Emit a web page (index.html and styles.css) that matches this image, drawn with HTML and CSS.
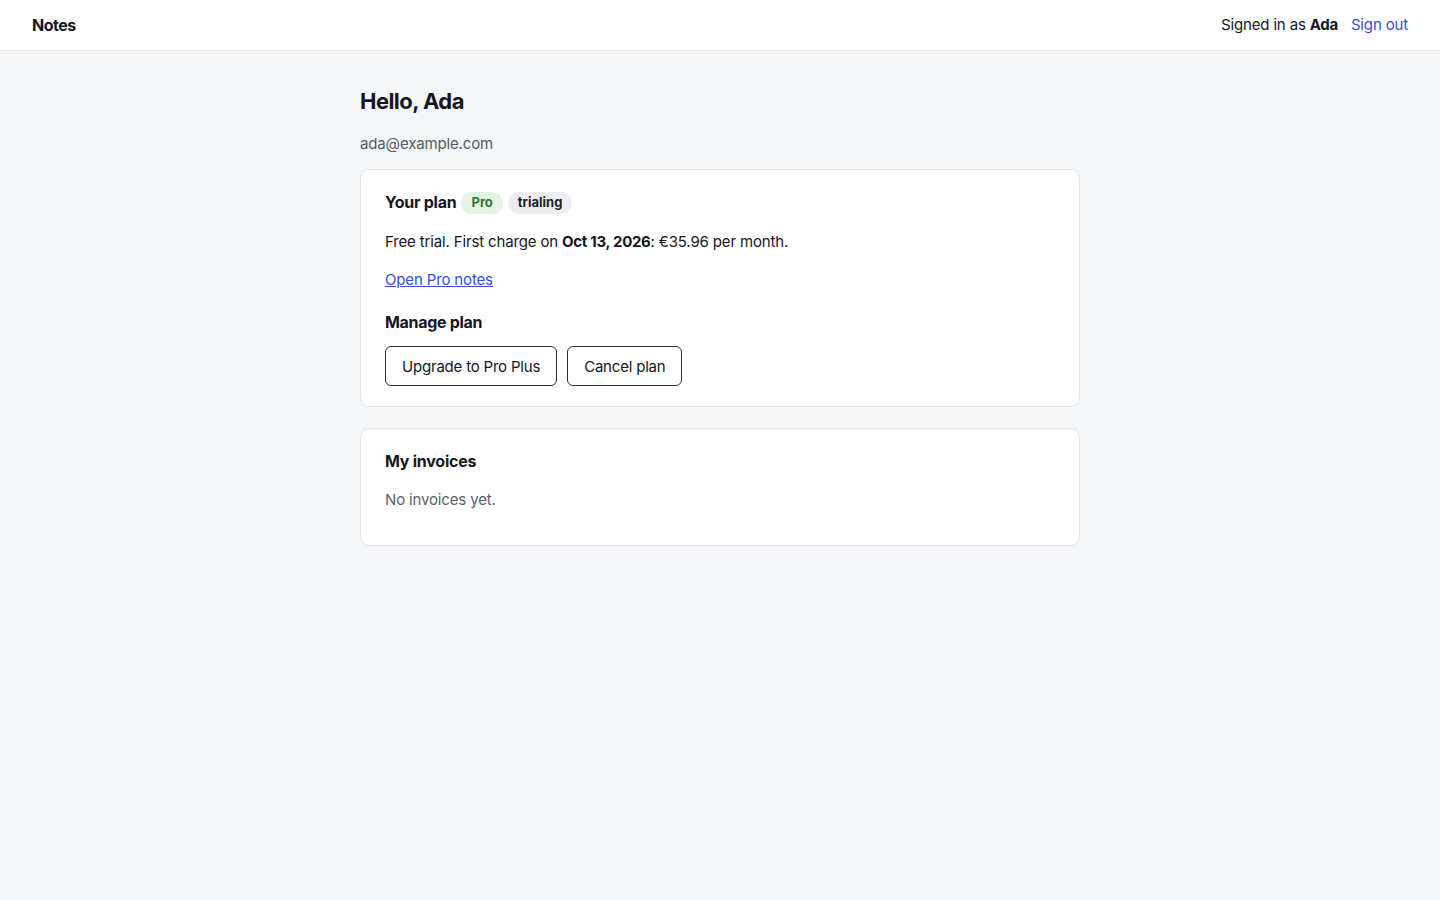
FILE: index.html
```html
<!DOCTYPE html>
<html lang="en">
<head>
<meta charset="utf-8">
<title>Notes</title>
<link rel="stylesheet" href="styles.css">
</head>
<body>
<header class="topbar">
  <div class="brand">Notes</div>
  <div class="session">
    <span>Signed in as <strong>Ada</strong></span>
    <a href="#" class="signout">Sign out</a>
  </div>
</header>
<main class="container">
  <h1 class="greeting">Hello, Ada</h1>
  <p class="email">ada@example.com</p>

  <section class="card">
    <div class="plan-head">
      <h2 class="card-title">Your plan</h2>
      <span class="badge badge-green">Pro</span>
      <span class="badge badge-gray">trialing</span>
    </div>
    <p class="text">Free trial. First charge on <strong>Oct 13, 2026</strong>: €35.96 per month.</p>
    <p class="text"><a href="#" class="link">Open Pro notes</a></p>
    <h3 class="subhead">Manage plan</h3>
    <div class="actions">
      <button class="btn">Upgrade to Pro Plus</button>
      <button class="btn">Cancel plan</button>
    </div>
  </section>

  <section class="card">
    <h2 class="card-title">My invoices</h2>
    <p class="text muted">No invoices yet.</p>
  </section>
</main>
</body>
</html>
```

FILE: styles.css
```css
* { box-sizing: border-box; }
html, body { margin: 0; padding: 0; }
body {
  font-family: Inter, "Noto Sans", "Liberation Sans", sans-serif;
  background: #f5f6f8;
  color: #15171c;
  font-size: 15px;
  line-height: 1.5;
  letter-spacing: -0.15px;
}
strong { letter-spacing: -0.3px; }
.topbar {
  height: 51px;
  background: #ffffff;
  border-bottom: 1px solid #e6e8ec;
  display: flex;
  align-items: center;
  justify-content: space-between;
  padding: 0 32px;
}
.brand { font-weight: 700; font-size: 16px; letter-spacing: -0.5px; }
.session { display: flex; align-items: center; gap: 13px; font-size: 15px; padding-top: 1px; }
.signout { color: #3551d9; text-decoration: none; }
.container {
  width: 720px;
  margin: 0 auto;
  padding-top: 36px;
}
.greeting {
  font-size: 22px;
  line-height: 28px;
  margin: 0;
  font-weight: 700;
  letter-spacing: -0.55px;
}
.email {
  color: #545a64;
  margin: 18px 0 14px;
  font-size: 15px;
  line-height: 22px;
}
.card {
  background: #ffffff;
  border: 1px solid #e4e6ea;
  border-radius: 9px;
  padding: 20px 24px;
  margin-bottom: 21px;
}
.plan-head { display: flex; align-items: center; gap: 5px; height: 24px; }
.card-title {
  font-size: 16px;
  line-height: 24px;
  font-weight: 700;
  margin: 0;
  letter-spacing: -0.25px;
}
.badge {
  display: inline-flex;
  align-items: center;
  height: 22px;
  padding: 0 10px;
  border-radius: 11px;
  font-size: 13px;
  font-weight: 700;
  margin-top: 2px;
  letter-spacing: 0;
}
.badge-green { background: #e5f3e6; color: #2e7a34; }
.badge-gray { background: #eceef1; color: #1c1f25; }
.text { margin: 16px 0 0; line-height: 22px; }
.plan-head + .text { margin-top: 17px; }
.card > .text:last-child { margin-bottom: 14px; }
.muted { color: #5a606b; }
.link { color: #3551d9; text-decoration: underline; }
.subhead {
  font-size: 16px;
  line-height: 24px;
  font-weight: 700;
  margin: 19px 0 12px;
  letter-spacing: -0.3px;
}
.actions { display: flex; gap: 10px; }
.btn {
  font-family: inherit;
  font-size: 15px;
  letter-spacing: -0.2px;
  color: #15171c;
  background: #ffffff;
  border: 1px solid #2a2d33;
  border-radius: 6px;
  height: 40px;
  padding: 0 16px;
  cursor: pointer;
}
```
